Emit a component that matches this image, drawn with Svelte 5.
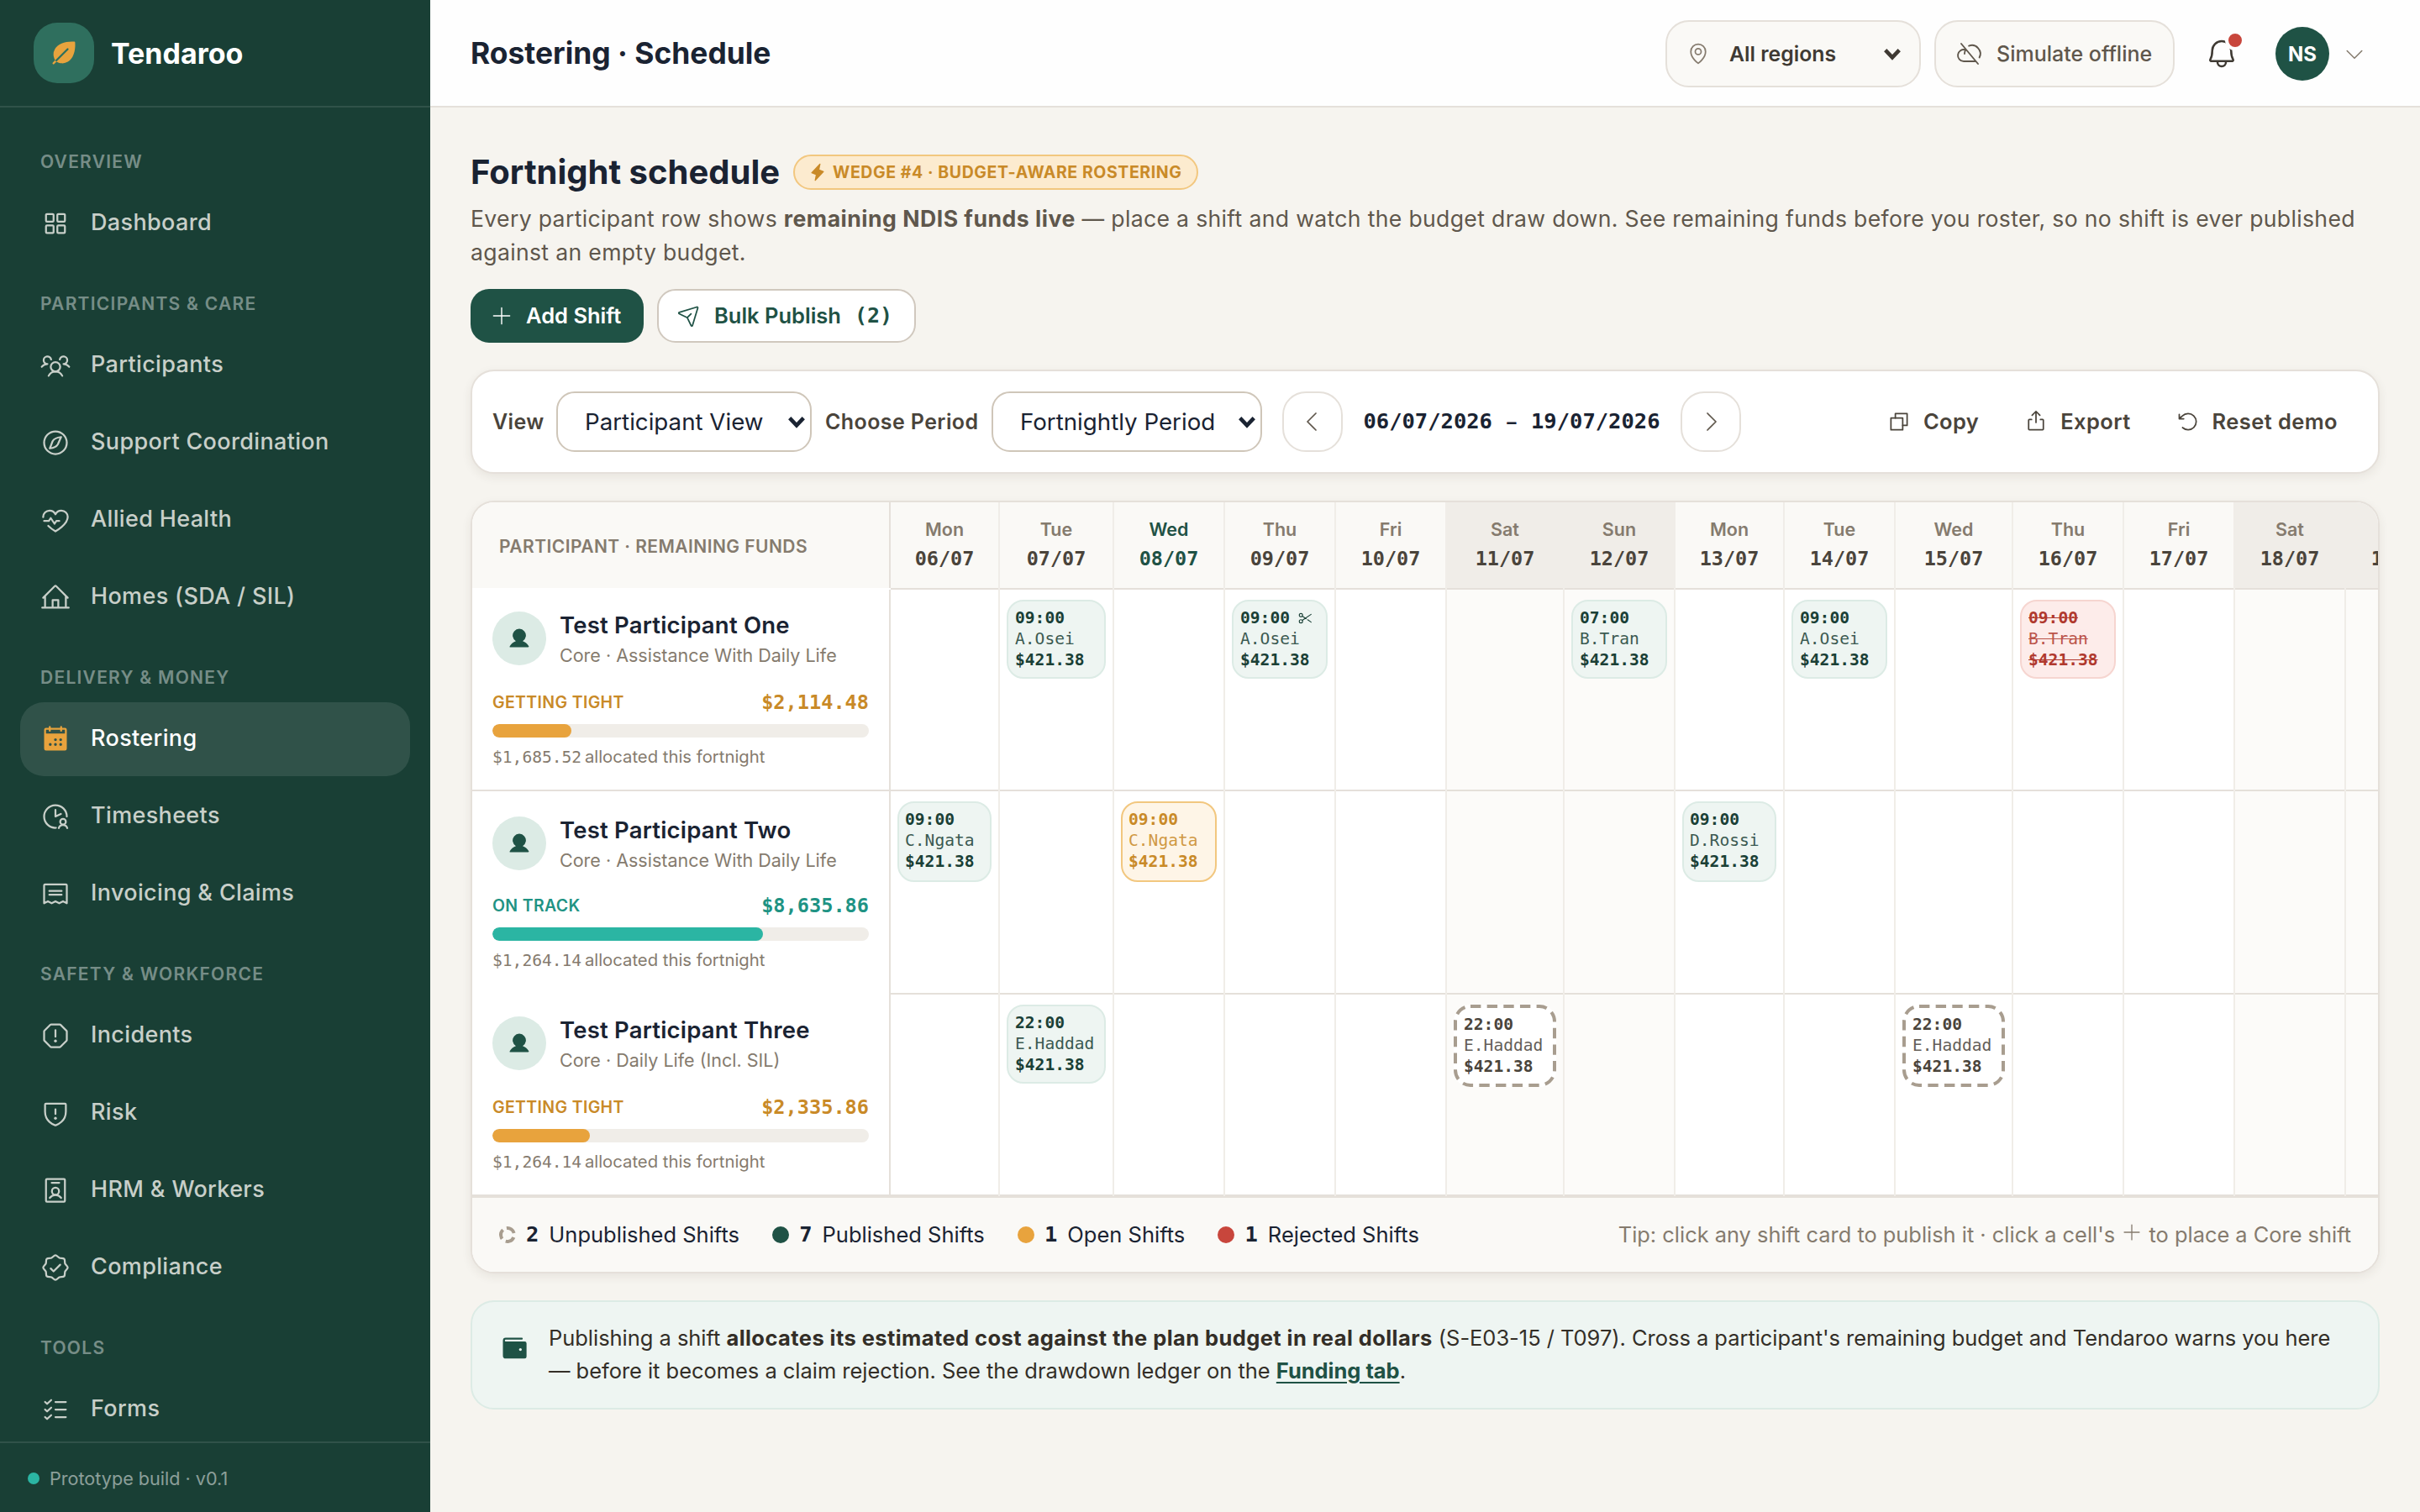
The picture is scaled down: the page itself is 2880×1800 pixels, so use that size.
<script lang="ts">
  type ShiftStatus = "published" | "open" | "rejected" | "draft";

  interface Shift {
    day: number;
    time: string;
    worker: string;
    status: ShiftStatus;
    split?: boolean;
  }

  interface Participant {
    name: string;
    plan: string;
    health: "tight" | "ok";
    remaining: string;
    percent: number;
    allocated: string;
    shifts: Shift[];
  }

  // icon bodies on a 256 grid, stroked unless they carry class="solid"
  const icons: Record<string, string> = {
    leaf: '<path class="solid" d="M223.45,40.07a8,8,0,0,0-7.52-7.52C139.8,28.08,78.82,51,52.82,94a87.09,87.09,0,0,0-12.76,49c.57,15.92,5.21,32,13.79,47.85l-19.51,19.5a8,8,0,0,0,11.32,11.32l19.5-19.51C81,210.73,97.09,215.37,113,215.94q1.67.06,3.33.06A86.93,86.93,0,0,0,162,203.18C205,177.18,227.93,116.21,223.45,40.07Z"/><path stroke="#2f6f5e" d="M64,192 160,96"/>',
    dashboard: '<rect x="48" y="48" width="64" height="64" rx="8"/><rect x="144" y="48" width="64" height="64" rx="8"/><rect x="48" y="144" width="64" height="64" rx="8"/><rect x="144" y="144" width="64" height="64" rx="8"/>',
    participants: '<circle cx="128" cy="140" r="40"/><path d="M196,116a59.8,59.8,0,0,1,48,24M12,140a59.8,59.8,0,0,1,48-24M70.4,216a64.1,64.1,0,0,1,115.2,0M60,116A32,32,0,1,1,91.4,78M164.6,78A32,32,0,1,1,196,116"/>',
    compass: '<circle cx="128" cy="128" r="96"/><path d="M176,80 C140,84 112,100 104,116 C96,134 92,152 80,176 C116,172 138,160 148,142 C158,122 164,104 176,80Z"/>',
    heartbeat: '<path d="M32,136H72l16-24,32,48,16-24h24"/><path d="M24,104c0-.67,0-1.33,0-2A54,54,0,0,1,78,48c22.59,0,41.94,12.31,50,32,8.06-19.69,27.41-32,50-32a54,54,0,0,1,54,54c0,66-104,122-104,122s-33-17.8-61-46"/>',
    house: '<path d="M16,216H240M152,216V152H104v64M40,116.7V216M216,216V116.7M24,132.7l98.3-98.4a8,8,0,0,1,11.4,0L232,132.7"/>',
    calendar: '<path class="solid" fill-rule="evenodd" d="M208,32H184V24a8,8,0,0,0-16,0v8H88V24a8,8,0,0,0-16,0v8H48A16,16,0,0,0,32,48V208a16,16,0,0,0,16,16H208a16,16,0,0,0,16-16V48A16,16,0,0,0,208,32ZM48,48H72v8a8,8,0,0,0,16,0V48h80v8a8,8,0,0,0,16,0V48h24V80H48ZM116,132a12,12,0,1,0,24,0a12,12,0,1,0,-24,0ZM160,132a12,12,0,1,0,24,0a12,12,0,1,0,-24,0ZM72,172a12,12,0,1,0,24,0a12,12,0,1,0,-24,0ZM116,172a12,12,0,1,0,24,0a12,12,0,1,0,-24,0ZM160,172a12,12,0,1,0,24,0a12,12,0,1,0,-24,0Z"/>',
    timesheet: '<path d="M128,72v56l46-22M224,128A96,96,0,1,0,132,224M156,226a38,38,0,0,1,72,0"/><circle cx="192" cy="172" r="24"/>',
    receipt: '<path d="M76,104H180M76,136H180M32,208V56a8,8,0,0,1,8-8H216a8,8,0,0,1,8,8V208l-32-16-32,16-32-16L96,208,64,192Z"/>',
    octagon: '<path d="M128,80v56M91.5,32h73a8,8,0,0,1,5.6,2.3l51.6,51.6a8,8,0,0,1,2.3,5.6v73a8,8,0,0,1-2.3,5.6l-51.6,51.6a8,8,0,0,1-5.6,2.3h-73a8,8,0,0,1-5.6-2.3L34.3,170.1a8,8,0,0,1-2.3-5.6v-73a8,8,0,0,1,2.3-5.6L85.9,34.3A8,8,0,0,1,91.5,32Z"/><circle class="solid" cx="128" cy="172" r="12"/>',
    shield: '<path d="M128,96v40M40,114.8V56a8,8,0,0,1,8-8H208a8,8,0,0,1,8,8v58.8c0,84.1-71.3,112-85.5,116.8a7.5,7.5,0,0,1-5,0C111.3,226.9,40,199,40,114.8Z"/><circle class="solid" cx="128" cy="172" r="12"/>',
    badge: '<rect x="48" y="32" width="160" height="192" rx="8"/><circle cx="128" cy="136" r="30"/><path d="M96,64h64M80,192a60,60,0,0,1,96,0"/>',
    seal: '<path d="M88,136l24,24,56-56M54.5,201.5c-9.2-9.2-3.1-28.5-7.8-39.8C41.8,150,24,140.5,24,128s17.8-22,22.7-33.7C51.4,83,45.3,63.7,54.5,54.5S83,51.4,94.3,46.7C106,41.8,115.5,24,128,24S150,41.8,161.7,46.7c11.3,4.7,30.6-1.4,39.8,7.8s3.1,28.5,7.8,39.8C214.2,106,232,115.5,232,128S214.2,150,209.3,161.7c-4.7,11.3,1.4,30.6-7.8,39.8s-28.5,3.1-39.8,7.8C150,214.2,140.5,232,128,232s-22-17.8-33.7-22.7C83,204.6,63.7,210.7,54.5,201.5Z"/>',
    checks: '<path d="M128,64h88M128,128h88M128,192h88M92,48,57.3,80,40,64M92,112,57.3,144,40,128M92,176,57.3,208,40,192"/>',
    pin: '<circle cx="128" cy="104" r="32"/><path d="M208,104c0,72-80,128-80,128S48,176,48,104a80,80,0,0,1,160,0Z"/>',
    cloudOff: '<path d="M48,32,208,224M186,200H72A56,56,0,1,1,85.9,89.7M80,128a80,80,0,0,1,12-42M121,53A80,80,0,0,1,221,164"/>',
    bell: '<path d="M96,192a32,32,0,0,0,64,0M56,104a72,72,0,0,1,144,0c0,35.8,8.3,56.6,14.9,68a8,8,0,0,1-6.9,12H48a8,8,0,0,1-6.9-12C47.7,160.6,56,139.8,56,104Z"/>',
    caretDown: '<path d="M208,96l-80,80L48,96"/>',
    caretLeft: '<path d="M160,208,80,128l80-80"/>',
    caretRight: '<path d="M96,48l80,80L96,208"/>',
    plus: '<path d="M40,128H216M128,40V216"/>',
    plane: '<path d="M108,148l42-42M223.7,42.2a8,8,0,0,0-9.9-9.9l-192,58.2a8,8,0,0,0-1.2,15L106.2,146a8,8,0,0,1,3.8,3.8l40.6,85.6a8,8,0,0,0,14.9-1.2Z"/>',
    copy: '<path d="M168,168h48V40H88V88"/><rect x="40" y="88" width="128" height="128"/>',
    share: '<path d="M86,58l42-42,42,42M128,16V136M176,104h24a8,8,0,0,1,8,8v96a8,8,0,0,1-8,8H56a8,8,0,0,1-8-8V112a8,8,0,0,1,8-8H80"/>',
    undo: '<path d="M80,96H32V48M68,192A88,88,0,1,0,65.8,65.8L32,96"/>',
    scissors: '<circle cx="60" cy="76" r="28"/><circle cx="60" cy="180" r="28"/><path d="M136,128,83,164M232,62.5,83,164M83,92l64,44M174,153,232,193.500"/>',
    bolt: '<path class="solid" d="M213.85,125.46l-112,120a8,8,0,0,1-13.69-7l14.66-73.33L45.19,143.49a8,8,0,0,1-3-13l112-120a8,8,0,0,1,13.69,7L153.18,90.9l57.63,21.61a8,8,0,0,1,3,12.95Z"/>',
    user: '<path class="solid" d="M230.93,220a8,8,0,0,1-6.93,4H32a8,8,0,0,1-6.92-12c15.23-26.33,38.7-45.21,66.09-54.16a72,72,0,1,1,73.66,0c27.39,8.95,50.86,27.83,66.09,54.16A8,8,0,0,1,230.93,220Z"/>',
    wallet: '<path class="solid" d="M216,64H56a8,8,0,0,1,0-16H192a8,8,0,0,0,0-16H56A24,24,0,0,0,32,56V184a24,24,0,0,0,24,24H216a16,16,0,0,0,16-16V80A16,16,0,0,0,216,64Zm-36,80a12,12,0,1,1,12-12A12,12,0,0,1,180,144Z"/>',
    chevron: '<path stroke-width="58" stroke-linecap="butt" stroke-linejoin="miter" d="M22,72,128,184,234,72"/>',
  };

  const navSections = [
    { label: "Overview", items: [{ icon: "dashboard", label: "Dashboard" }] },
    {
      label: "Participants & Care",
      items: [
        { icon: "participants", label: "Participants" },
        { icon: "compass", label: "Support Coordination" },
        { icon: "heartbeat", label: "Allied Health" },
        { icon: "house", label: "Homes (SDA / SIL)" },
      ],
    },
    {
      label: "Delivery & Money",
      items: [
        { icon: "calendar", label: "Rostering" },
        { icon: "timesheet", label: "Timesheets" },
        { icon: "receipt", label: "Invoicing & Claims" },
      ],
    },
    {
      label: "Safety & Workforce",
      items: [
        { icon: "octagon", label: "Incidents" },
        { icon: "shield", label: "Risk" },
        { icon: "badge", label: "HRM & Workers" },
        { icon: "seal", label: "Compliance" },
      ],
    },
    { label: "Tools", items: [{ icon: "checks", label: "Forms" }] },
  ];

  const weekdays = ["Mon", "Tue", "Wed", "Thu", "Fri", "Sat", "Sun"];
  const days = Array.from({ length: 14 }, (_, i) => ({
    name: weekdays[i % 7],
    date: `${String(i + 6).padStart(2, "0")}/07`,
    weekend: i % 7 > 4,
    today: i === 2,
  }));

  const participants: Participant[] = [
    {
      name: "Test Participant One",
      plan: "Core · Assistance With Daily Life",
      health: "tight",
      remaining: "$2,114.48",
      percent: 21,
      allocated: "$1,685.52",
      shifts: [
        { day: 1, time: "09:00", worker: "A.Osei", status: "published" },
        { day: 3, time: "09:00", worker: "A.Osei", status: "published", split: true },
        { day: 6, time: "07:00", worker: "B.Tran", status: "published" },
        { day: 8, time: "09:00", worker: "A.Osei", status: "published" },
        { day: 10, time: "09:00", worker: "B.Tran", status: "rejected" },
      ],
    },
    {
      name: "Test Participant Two",
      plan: "Core · Assistance With Daily Life",
      health: "ok",
      remaining: "$8,635.86",
      percent: 71.9,
      allocated: "$1,264.14",
      shifts: [
        { day: 0, time: "09:00", worker: "C.Ngata", status: "published" },
        { day: 2, time: "09:00", worker: "C.Ngata", status: "open" },
        { day: 7, time: "09:00", worker: "D.Rossi", status: "published" },
      ],
    },
    {
      name: "Test Participant Three",
      plan: "Core · Daily Life (Incl. SIL)",
      health: "tight",
      remaining: "$2,335.86",
      percent: 25.9,
      allocated: "$1,264.14",
      shifts: [
        { day: 1, time: "22:00", worker: "E.Haddad", status: "published" },
        { day: 5, time: "22:00", worker: "E.Haddad", status: "draft" },
        { day: 9, time: "22:00", worker: "E.Haddad", status: "draft" },
      ],
    },
  ];

  const legend = [
    { kind: "draft", count: 2, label: "Unpublished Shifts" },
    { kind: "published", count: 7, label: "Published Shifts" },
    { kind: "open", count: 1, label: "Open Shifts" },
    { kind: "rejected", count: 1, label: "Rejected Shifts" },
  ];

  let active = $state("Rostering");
</script>

{#snippet icon(name: string, size: number, weight = 16)}
  <svg
    class="icon"
    width={size}
    height={size}
    viewBox="0 0 256 256"
    fill="none"
    stroke="currentColor"
    stroke-width={weight}
    stroke-linecap="round"
    stroke-linejoin="round"
    aria-hidden="true"
  >{@html icons[name]}</svg>
{/snippet}

<div class="app">
  <aside class="sidebar">
    <div class="brand">
      <span class="brand-mark">{@render icon("leaf", 36)}</span>
      <span class="brand-name">Tendaroo</span>
    </div>
    <nav>
      {#each navSections as section}
        <div class="nav-section">
          <p class="nav-label">{section.label}</p>
          {#each section.items as item}
            <button class="nav-item" class:active={active === item.label} type="button" onclick={() => (active = item.label)}>
              {@render icon(item.icon, 36)}
              <span>{item.label}</span>
            </button>
          {/each}
        </div>
      {/each}
    </nav>
    <div class="build"><i></i><span>Prototype build · v0.1</span></div>
  </aside>

  <div class="main">
    <header class="topbar">
      <h2>Rostering · Schedule</h2>
      <div class="topbar-tools">
        <div class="chip region">
          {@render icon("pin", 28)}
          <span>All regions</span>
          {@render icon("chevron", 20)}
        </div>
        <button class="chip offline" type="button">
          {@render icon("cloudOff", 32, 15)}
          <span>Simulate offline</span>
        </button>
        <div class="bell">{@render icon("bell", 40)}<i></i></div>
        <div class="avatar">NS</div>
        <span class="account-caret">{@render icon("caretDown", 28, 14)}</span>
      </div>
    </header>

    <main class="content">
      <div class="title-row">
        <h1>Fortnight schedule</h1>
        <span class="wedge">{@render icon("bolt", 22)}<span>WEDGE #4 · BUDGET-AWARE ROSTERING</span></span>
      </div>
      <p class="lead">
        Every participant row shows <strong>remaining NDIS funds live</strong> — place a shift and watch the budget draw down. See remaining funds before you roster, so no shift is ever published<br />against an empty budget.
      </p>
      <div class="actions">
        <button class="btn primary" type="button">{@render icon("plus", 28, 13)}<span>Add Shift</span></button>
        <button class="btn outline" type="button">{@render icon("plane", 28)}<span>Bulk Publish</span><span class="mono count">(2)</span></button>
      </div>

      <section class="toolbar card">
        <span class="field-label">View</span>
        <div class="select view"><span>Participant View</span>{@render icon("chevron", 20)}</div>
        <span class="field-label period-label">Choose Period</span>
        <div class="select period"><span>Fortnightly Period</span>{@render icon("chevron", 20)}</div>
        <button class="step" type="button" aria-label="Previous">{@render icon("caretLeft", 32, 14)}</button>
        <span class="range mono">06/07/2026 <span class="dash">–</span> 19/07/2026</span>
        <button class="step" type="button" aria-label="Next">{@render icon("caretRight", 32, 14)}</button>
        <div class="toolbar-links">
          <button type="button">{@render icon("copy", 28)}<span>Copy</span></button>
          <button type="button">{@render icon("share", 28)}<span>Export</span></button>
          <button type="button">{@render icon("undo", 28)}<span>Reset demo</span></button>
        </div>
      </section>

      <section class="board card">
        <div class="grid head">
          <div class="corner">PARTICIPANT · REMAINING FUNDS</div>
          {#each days as day}
            <div class="day" class:weekend={day.weekend} class:today={day.today}>
              <span>{day.name}</span>
              <b class="mono">{day.date}</b>
            </div>
          {/each}
        </div>
        {#each participants as p}
          <div class="grid row">
            <div class="person">
              <div class="who">
                <span class="who-icon">{@render icon("user", 28)}</span>
                <div>
                  <p class="who-name">{p.name}</p>
                  <p class="who-plan">{p.plan}</p>
                </div>
              </div>
              <div class="funds {p.health}">
                <div class="funds-head">
                  <span>{p.health === "ok" ? "ON TRACK" : "GETTING TIGHT"}</span>
                  <b class="mono">{p.remaining}</b>
                </div>
                <div class="bar"><div class="fill" style="width: {p.percent}%"></div></div>
                <p class="allocated"><span class="mono">{p.allocated}</span> allocated this fortnight</p>
              </div>
            </div>
            {#each days as day, i}
              <div class="cell" class:weekend={day.weekend}>
                {#each p.shifts.filter((s) => s.day === i) as shift}
                  <div class="shift mono {shift.status}">
                    {#if shift.status === "draft"}
                      <svg class="dashes" width="122" height="98" fill="none" stroke="#a89d8f" stroke-width="4" stroke-dasharray="12.4 7.25">
                        <rect x="2" y="2" width="118" height="94" rx="18" />
                      </svg>
                    {/if}
                    <b>{shift.time}{#if shift.split}{@render icon("scissors", 18)}{/if}</b>
                    <span>{shift.worker}</span>
                    <b>$421.38</b>
                  </div>
                {/each}
              </div>
            {/each}
          </div>
        {/each}
        <div class="legend">
          {#each legend as entry}
            <div class="legend-item">
              {#if entry.kind === "draft"}
                <svg class="ring" width="20" height="20" fill="none" stroke="#a89d8f" stroke-width="4" stroke-dasharray="11.6 5.15">
                  <circle cx="10" cy="10" r="8" />
                </svg>
              {:else}
                <i class={entry.kind}></i>
              {/if}
              <b class="mono">{entry.count}</b>
              <span>{entry.label}</span>
            </div>
          {/each}
          <p class="tip">Tip: click any shift card to publish it · click a cell's {@render icon("plus", 26, 13)} to place a Core shift</p>
        </div>
      </section>

      <section class="note">
        {@render icon("wallet", 36)}
        <p>
          Publishing a shift <strong>allocates its estimated cost against the plan budget in real dollars</strong> (S-E03-15 / T097). Cross a participant's remaining budget and Tendaroo warns you here<br />— before it becomes a claim rejection. See the drawdown ledger on the <a href="#funding">Funding tab</a>.
        </p>
      </section>
    </main>
  </div>
</div>

<style>
  :global(body) {
    background: #f6f4ef;
  }

  .app {
    --green: #1f5245;
    --ink: #1a2332;
    --text: #4a443b;
    --soft: #5f574c;
    --muted: #857b6e;
    --line: #e5e0da;
    --line-soft: #f0ede8;
    --paper: #faf9f6;
    --amber: #e8a33d;
    --amber-dark: #c98a28;
    display: flex;
    width: 2880px;
    height: 1800px;
    overflow: hidden;
    font-family: Inter, sans-serif;
    color: var(--ink);
    background: #f6f4ef;
  }

  .app :global(*) {
    box-sizing: border-box;
  }

  p,
  h1,
  h2 {
    margin: 0;
  }

  button {
    margin: 0;
    padding: 0;
    border: 0;
    background: none;
    font: inherit;
    letter-spacing: inherit;
    color: inherit;
    text-align: left;
    white-space: nowrap;
  }

  .icon {
    flex: none;
    display: block;
  }

  .icon :global(.solid) {
    fill: currentColor;
    stroke: none;
  }

  .mono {
    font-family: "DejaVu Sans Mono", monospace;
  }

  /* sidebar */
  .sidebar {
    flex: none;
    display: flex;
    flex-direction: column;
    width: 512px;
    background: #193f35;
    color: #fff;
  }

  .brand {
    flex: none;
    display: flex;
    align-items: center;
    gap: 20px;
    height: 128px;
    padding: 0 40px;
    border-bottom: 2px solid rgba(255, 255, 255, 0.1);
  }

  .brand-mark {
    display: grid;
    place-items: center;
    width: 72px;
    height: 72px;
    border-radius: 28px;
    background: #2f6f5e;
    color: var(--amber);
  }

  .brand-name {
    font-size: 34px;
    font-weight: 700;
  }

  nav {
    flex: 1;
    min-height: 0;
    overflow: hidden;
    display: flex;
    flex-direction: column;
    gap: 21.1px;
    padding: 34px 24px 0;
  }

  .nav-section {
    flex: none;
    display: flex;
    flex-direction: column;
    gap: 4px;
  }

  .nav-label {
    height: 56px;
    padding-left: 24px;
    font-size: 21px;
    font-weight: 600;
    line-height: 62px;
    letter-spacing: 0.06em;
    text-transform: uppercase;
    color: rgba(255, 255, 255, 0.42);
  }

  .nav-item {
    display: flex;
    align-items: center;
    gap: 24px;
    height: 88px;
    padding-left: 24px;
    border-radius: 28px;
    font-size: 27px;
    font-weight: 500;
    letter-spacing: 0.35px;
    color: #c8cfc9;
  }

  .nav-item span {
    padding-bottom: 3px;
  }

  .nav-item.active {
    background: rgba(255, 255, 255, 0.1);
    color: #fff;
  }

  .nav-item.active .icon {
    color: var(--amber);
  }

  .build {
    flex: none;
    display: flex;
    align-items: center;
    gap: 12px;
    height: 84px;
    padding: 1px 0 0 33px;
    border-top: 2px solid rgba(255, 255, 255, 0.1);
    font-size: 21.6px;
    color: rgba(255, 255, 255, 0.5);
  }

  .build i {
    width: 14px;
    height: 14px;
    border-radius: 50%;
    background: #2bb5a3;
  }

  /* top bar */
  .main {
    flex: 1;
    min-width: 0;
  }

  .topbar {
    display: flex;
    align-items: center;
    justify-content: space-between;
    height: 128px;
    padding: 0 64px 0 48px;
    border-bottom: 2px solid var(--line);
    background: #fefefe;
  }

  h2 {
    font-size: 35.4px;
    font-weight: 700;
  }

  .topbar-tools {
    display: flex;
    align-items: center;
    padding-top: 2px;
    color: var(--soft);
  }

  .chip {
    display: flex;
    align-items: center;
    height: 80px;
    border: 2px solid var(--line);
    border-radius: 28px;
    background: var(--paper);
    font-size: 25px;
  }

  .region {
    width: 304px;
    padding: 0 22px 0 23px;
    font-weight: 600;
    color: #3f3a33;
  }

  .region span {
    flex: 1;
    padding-left: 23px;
    font-size: 24.8px;
  }

  .region .icon:first-child {
    color: var(--muted);
  }

  .offline {
    width: 286px;
    margin-left: 16px;
    padding-left: 24px;
    gap: 16px;
    font-weight: 500;
    color: var(--soft);
  }

  .bell {
    position: relative;
    margin: 0 44px 0 36px;
    color: #3f3a33;
  }

  .bell i {
    position: absolute;
    top: -8px;
    right: -8px;
    width: 24px;
    height: 24px;
    border: 4px solid #fefefe;
    border-radius: 50%;
    background: #c8463c;
  }

  .avatar {
    display: grid;
    place-items: center;
    width: 64px;
    height: 64px;
    margin-right: 16px;
    border-radius: 50%;
    background: var(--green);
    color: #fff;
    font-size: 24px;
    font-weight: 700;
  }

  .account-caret {
    color: var(--muted);
  }

  /* page heading */
  .content {
    padding: 54px 48px 0;
  }

  .title-row {
    display: flex;
    align-items: center;
    gap: 16px;
    height: 46px;
  }

  h1 {
    padding-bottom: 2px;
    font-size: 40px;
    font-weight: 700;
  }

  .wedge {
    display: flex;
    align-items: center;
    gap: 7px;
    width: 482px;
    height: 42px;
    padding: 0 16px;
    border: 2px solid #f2c77f;
    border-radius: 21px;
    background: #fcebcf;
    color: var(--amber-dark);
    font-size: 19.5px;
    font-weight: 700;
    letter-spacing: 0.03em;
    white-space: nowrap;
  }

  .lead {
    margin-top: 12px;
    font-size: 26.6px;
    line-height: 40px;
    letter-spacing: 0.33px;
    white-space: nowrap;
    color: var(--soft);
  }

  .lead strong {
    letter-spacing: 0.5px;
  }

  .actions {
    display: flex;
    gap: 16px;
    margin-top: 24px;
  }

  .btn {
    display: flex;
    align-items: center;
    height: 64px;
    padding: 0 23px;
    border-radius: 22px;
    font-size: 25.5px;
    font-weight: 600;
  }

  .btn span {
    padding-bottom: 2px;
  }

  .btn.primary {
    width: 206px;
    gap: 15px;
    background: var(--green);
    color: #fff;
  }

  .btn.outline {
    width: 308px;
    gap: 16px;
    padding: 0 22px;
    border: 2px solid #d0c8be;
    background: #fff;
    color: var(--green);
  }

  .count {
    font-size: 25px;
  }

  .card {
    border: 2px solid var(--line);
    border-radius: 28px;
    background: #fff;
    box-shadow: 0 4px 12px rgba(60, 50, 35, 0.08);
  }

  /* toolbar */
  .toolbar {
    display: flex;
    align-items: center;
    height: 124px;
    margin-top: 32px;
    padding: 0 48px 0 24px;
  }

  .field-label {
    width: 76px;
    padding-bottom: 1px;
    font-size: 25px;
    font-weight: 600;
    letter-spacing: 0.4px;
    color: var(--text);
  }

  .period-label {
    width: 198px;
    margin-left: 16px;
  }

  .select {
    display: flex;
    align-items: center;
    justify-content: space-between;
    height: 72px;
    padding: 0 6px 0 32px;
    border: 2px solid #cfc6b9;
    border-radius: 22px;
    font-size: 27.7px;
  }

  .view {
    width: 304px;
  }

  .period {
    width: 322px;
    margin-right: 24px;
  }

  .step {
    display: grid;
    place-items: center;
    width: 72px;
    height: 72px;
    border: 2px solid var(--line);
    border-radius: 28px;
    color: var(--soft);
  }

  .range {
    width: 402px;
    text-align: center;
    font-size: 25.5px;
    font-weight: 700;
  }

  .dash {
    display: inline-block;
    width: 1ch;
    font-family: "Liberation Mono", monospace;
  }

  .toolbar-links {
    display: flex;
    gap: 54px;
    margin-left: auto;
    color: var(--text);
    font-size: 25.5px;
    font-weight: 600;
    letter-spacing: 0.4px;
  }

  .toolbar-links button {
    display: flex;
    align-items: center;
    gap: 15px;
  }

  .toolbar-links span {
    padding-bottom: 1px;
  }

  /* schedule board */
  .board {
    margin-top: 32px;
    overflow: hidden;
  }

  .grid {
    display: grid;
    grid-template-columns: 498px 130px 136px 132px 132px 132px 140px 132px 130px 132px 140px 132px 132px 132px 132px;
    width: 2362px;
  }

  .head {
    grid-template-rows: 104px;
  }

  .corner {
    display: flex;
    align-items: center;
    height: 102px;
    padding: 2px 0 0 32px;
    border-right: 2px solid var(--line);
    background: var(--paper);
    color: var(--muted);
    font-size: 21px;
    font-weight: 600;
    letter-spacing: 0.021em;
  }

  .day {
    display: flex;
    flex-direction: column;
    align-items: center;
    gap: 8px;
    padding-top: 19px;
    border-right: 2px solid var(--line-soft);
    background: var(--paper);
    box-shadow: inset 0 -2px var(--line);
    color: var(--muted);
    font-size: 21.5px;
    font-weight: 600;
    line-height: 27px;
  }

  .day b {
    font-size: 23.5px;
    color: var(--text);
  }

  .day.weekend {
    background-color: var(--line-soft);
  }

  .day.today,
  .day.today b {
    color: var(--green);
  }

  .row {
    height: 240px;
  }

  .row:nth-child(3) {
    height: 242px;
  }

  .person {
    padding: 26px 24px 0;
    border-right: 2px solid var(--line);
  }

  .row:nth-child(2) .person,
  .row:nth-child(4) .person {
    box-shadow: inset 0 -2px var(--line);
  }

  .row:nth-child(3) .person {
    padding-top: 30px;
  }

  .who {
    display: flex;
    align-items: center;
    gap: 16px;
    height: 64px;
    padding-top: 2px;
  }

  .who-icon {
    display: grid;
    place-items: center;
    width: 64px;
    height: 64px;
    margin-top: -2px;
    border-radius: 50%;
    background: #dcebe5;
    color: var(--green);
  }

  .who-name {
    font-size: 27.5px;
    font-weight: 600;
    line-height: 38px;
    letter-spacing: 0.2px;
  }

  .who-plan {
    font-size: 21.5px;
    line-height: 34px;
    color: var(--muted);
  }

  .funds-head {
    display: flex;
    align-items: center;
    justify-content: space-between;
    height: 30px;
    margin-top: 29px;
    font-size: 19.5px;
    font-weight: 600;
    letter-spacing: 0.018em;
    color: var(--amber-dark);
  }

  .funds-head b {
    font-size: 23.6px;
    letter-spacing: 0;
  }

  .ok .funds-head {
    margin-top: 27px;
    color: #1f9384;
  }

  .bar {
    height: 16px;
    margin-top: 11px;
    border-radius: 8px;
    background: var(--line-soft);
    overflow: hidden;
  }

  .fill {
    height: 100%;
    border-radius: 8px;
    background: var(--amber);
  }

  .ok .fill {
    background: #2bb5a3;
  }

  .allocated {
    margin-top: 10px;
    font-size: 20.3px;
    line-height: 26px;
    color: var(--muted);
  }

  .allocated .mono {
    margin-right: -2px;
    font-size: 19.6px;
  }

  .cell {
    padding: 12px 8px 0;
    border-right: 2px solid var(--line-soft);
    box-shadow: inset 0 -2px var(--line);
  }

  .cell.weekend {
    background: #fcfbf9;
  }

  .shift {
    position: relative;
    display: flex;
    flex-direction: column;
    padding: 7px 8px 8px;
    border: 2px solid #dcebe5;
    border-radius: 20px;
    background: #eef5f2;
    color: #1a4036;
    font-size: 19.6px;
    line-height: 25px;
  }

  .row:nth-child(3) .shift {
    padding-bottom: 10px;
    padding-left: 7px;
  }

  .shift b {
    display: flex;
    align-items: center;
    gap: 9px;
  }

  .shift span {
    opacity: 0.85;
  }

  .shift.open {
    border-color: #f2c77f;
    background: #fef5e7;
    color: var(--amber-dark);
  }

  .shift.rejected {
    border-color: #f6d5d0;
    background: #fdecea;
    color: #b0392e;
    text-decoration: line-through;
  }

  .shift.draft {
    border: 4px solid transparent;
    background: #fff;
    color: #4a443b;
  }

  .dashes {
    position: absolute;
    top: -4px;
    left: -4px;
  }

  .legend {
    display: flex;
    align-items: center;
    gap: 39.2px;
    height: 90px;
    padding: 0 32px;
    border-top: 2px solid var(--line);
    background: var(--paper);
    font-size: 25.5px;
  }

  .legend-item {
    display: flex;
    align-items: center;
    gap: 12px;
  }

  .legend-item b,
  .legend-item span,
  .tip {
    padding-bottom: 2px;
  }

  .legend-item i {
    width: 20px;
    height: 20px;
    border-radius: 50%;
  }

  .ring {
    transform: rotate(-98deg);
  }

  .legend-item i.published {
    background: var(--green);
  }

  .legend-item i.open {
    background: var(--amber);
  }

  .legend-item i.rejected {
    background: #c8463c;
  }

  .tip {
    margin-left: auto;
    color: var(--muted);
    font-size: 25.4px;
    white-space: nowrap;
  }

  .tip .icon {
    display: inline-block;
    vertical-align: -1px;
  }

  .note {
    display: flex;
    align-items: center;
    gap: 23px;
    height: 130px;
    margin-top: 32px;
    padding-left: 32px;
    border: 2px solid #dcebe5;
    border-radius: 28px;
    background: #eef5f2;
    color: var(--green);
  }

  .note .icon {
    margin-top: -14px;
  }

  .note p {
    padding-bottom: 1px;
    font-size: 25.5px;
    line-height: 38.5px;
    letter-spacing: -0.04px;
    white-space: nowrap;
    color: #332e27;
  }

  .note strong {
    letter-spacing: 0.42px;
  }

  .note a {
    color: var(--green);
    font-weight: 700;
    text-underline-offset: 4px;
    text-decoration-thickness: 2px;
  }
</style>
